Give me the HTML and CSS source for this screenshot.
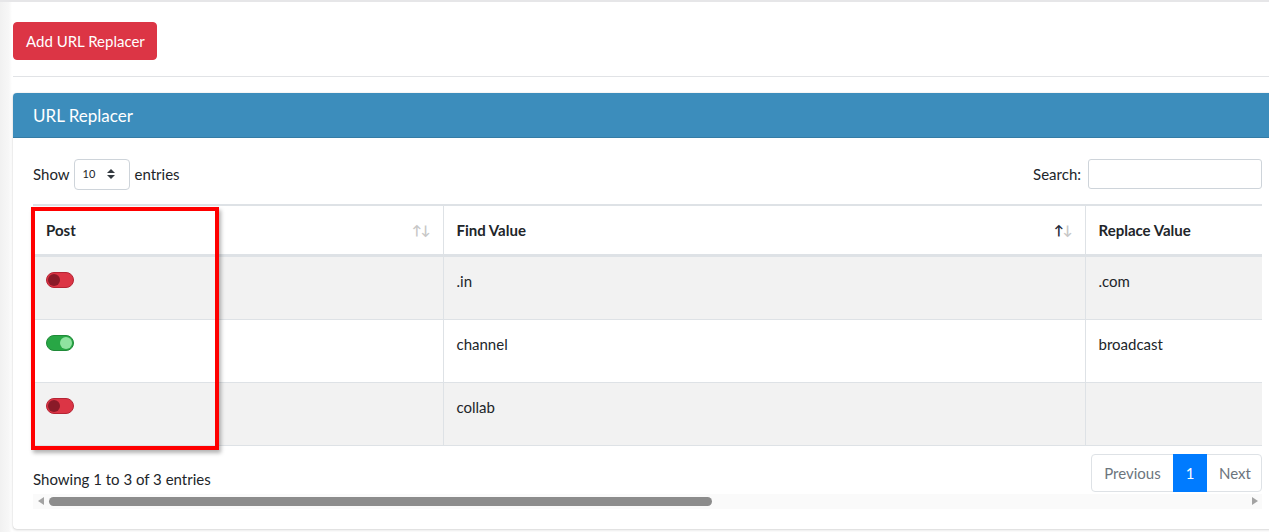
FILE: index.html
```html
<!DOCTYPE html>
<html>
<head>
<meta charset="utf-8">
<link rel="stylesheet" href="styles.css">
</head>
<body>
<div class="topline"></div>
<div class="page">
  <div class="actions">
    <button class="btn-danger">Add URL Replacer</button>
  </div>
  <hr class="sep">
  <div class="card">
    <div class="card-header">URL Replacer</div>
    <div class="card-body">
      <div class="dt-top">
        <label class="dt-length">Show
          <span class="select">10
            <svg class="caret" width="8" height="10" viewBox="0 0 8 10"><path d="M0 4 L4 0 L8 4 Z M0 6 L8 6 L4 10 Z" fill="#343a40"/></svg>
          </span>
          entries</label>
        <label class="dt-search">Search: <span class="search-input"></span></label>
      </div>
      <div class="table-area">
        <div class="table-wrap">
          <table class="dt">
            <colgroup><col class="c1"><col class="c2"><col class="c3"><col class="c4"></colgroup>
            <thead>
              <tr>
                <th><div class="th-in"><span>Post</span><span class="sort"><span class="up">↑</span><span class="down">↓</span></span></div></th>
                <th><div class="th-in"><span>Find Value</span><span class="sort"><span class="up active">↑</span><span class="down">↓</span></span></div></th>
                <th><div class="th-in"><span>Replace Value</span></div></th>
                <th></th>
              </tr>
            </thead>
            <tbody>
              <tr class="odd">
                <td><div class="cell-post"><span class="switch off"><span class="knob"></span></span></div></td>
                <td>.in</td>
                <td>.com</td>
                <td></td>
              </tr>
              <tr>
                <td><div class="cell-post"><span class="switch on"><span class="knob"></span></span></div></td>
                <td>channel</td>
                <td>broadcast</td>
                <td></td>
              </tr>
              <tr class="odd">
                <td><div class="cell-post"><span class="switch off"><span class="knob"></span></span></div></td>
                <td>collab</td>
                <td></td>
                <td></td>
              </tr>
            </tbody>
          </table>
        </div>
        <div class="annot"></div>
      </div>
      <div class="dt-bottom">
        <div class="dt-info">Showing 1 to 3 of 3 entries</div>
        <ul class="pagination">
          <li class="page-item disabled">Previous</li>
          <li class="page-item active">1</li>
          <li class="page-item disabled">Next</li>
        </ul>
      </div>
      <div class="hscroll">
        <span class="arrow left"></span>
        <div class="track"><div class="thumb"></div></div>
        <span class="arrow right"></span>
      </div>
    </div>
  </div>
</div>
</body>
</html>
```

FILE: styles.css
```css
* { box-sizing: border-box; }
html, body { margin: 0; padding: 0; }
body {
  font-family: "Lato", "Open Sans", sans-serif;
  font-size: 15px;
  line-height: 24px;
  color: #212529;
  overflow: hidden;
  width: 1269px;
  height: 532px;
  background: linear-gradient(to right, #f1f1f1 0, #f7f7f7 9px, #ffffff 12px);
}
.topline {
  height: 2px;
  background: #e6e6e8;
}
.page {
  margin-left: 13px;
  width: 1269px;
}
.actions { padding-top: 20px; height: 58px; }
.btn-danger {
  display: block;
  font-family: inherit;
  font-size: 15px;
  line-height: 24px;
  white-space: nowrap;
  color: #fff;
  background: #dc3545;
  border: 1px solid #dc3545;
  border-radius: 4px;
  padding: 6px 12px;
  width: 144px;
  height: 38px;
}
.sep {
  margin: 16px 0 16px 0;
  border: 0;
  border-top: 1px solid #e1e3e6;
  height: 0;
}
.card {
  background: #fff;
  border-radius: 4px;
  box-shadow: 0 0 1px rgba(0,0,0,.2), 0 1px 3px rgba(0,0,0,.15);
}
.card-header {
  background: #3c8dbc;
  color: #fff;
  font-size: 17px;
  line-height: 21px;
  padding: 12px 20px;
  height: 45px;
  border-radius: 4px 4px 0 0;
  border-bottom: 1px solid #357ca5;
}
.card-body {
  padding: 20px 20px 20px 20px;
  width: 1269px;
}
.dt-top {
  display: flex;
  justify-content: space-between;
  align-items: center;
  height: 32px;
  margin-bottom: 14px;
}
.dt-length, .dt-search {
  display: flex;
  align-items: center;
  gap: 4px;
}
.select {
  display: inline-flex;
  align-items: center;
  justify-content: space-between;
  width: 56px;
  height: 31px;
  border: 1px solid #ced4da;
  border-radius: 4px;
  font-size: 11px;
  padding: 0 14px 0 8px;
  margin-right: 1px;
}
.search-input {
  display: inline-block;
  width: 174px;
  height: 30px;
  border: 1px solid #ced4da;
  border-radius: 3px;
  margin-left: 3px;
}
.table-area { position: relative; }
.table-wrap {
  width: 1229px;
  overflow: hidden;
}
.dt {
  border-collapse: collapse;
  width: 2235px;
  table-layout: fixed;
  border-top: 2px solid #dee2e6;
}
.c1 { width: 410px; }
.c2 { width: 642px; }
.c3 { width: 600px; }
.c4 { width: 583px; }
.dt th {
  text-align: left;
  font-weight: 700;
  padding: 12px 12px 11px 13px;
  border-bottom: 3px solid #dee2e6;
  border-left: 1px solid #dee2e6;
  height: 50px;
}
.dt th:first-child, .dt td:first-child { border-left: 0; }
.th-in {
  display: flex;
  justify-content: space-between;
  align-items: center;
}
.sort {
  font-size: 13px;
  letter-spacing: -1px;
  color: #c7c7c7;
  padding-right: 1px;
}
.sort .active { color: #1d2a3a; font-weight: 700; }
.dt td {
  vertical-align: top;
  padding: 12px 12px 12px 13px;
  border-top: 1px solid #dee2e6;
  border-left: 1px solid #dee2e6;
  height: 63px;
}
.dt tbody tr:first-child td { border-top: 0; }
.dt tbody tr:last-child td { border-bottom: 1px solid #dee2e6; }
.dt tr.odd td { background: #f2f2f2; }
.cell-post { height: 38px; padding-top: 3px; }
.switch {
  display: block;
  position: relative;
  width: 28px;
  height: 16px;
  border-radius: 8px;
}
.switch .knob {
  position: absolute;
  top: 1px;
  width: 12px;
  height: 12px;
  border-radius: 50%;
}
.switch.off { background: #dc3545; border: 1px solid #b52434; }
.switch.off .knob { left: 1px; background: #8a1a28; }
.switch.on { background: #28a745; border: 1px solid #1f8a38; }
.switch.on .knob { right: 1px; background: #8fe3a0; }
.annot {
  position: absolute;
  left: -2px;
  top: 3px;
  width: 188px;
  height: 243px;
  border: 4px solid #ff0000;
  box-shadow: 2px 3px 4px rgba(0,0,0,.3);
}
.dt-bottom {
  display: flex;
  justify-content: space-between;
  align-items: flex-start;
  margin-top: 8px;
  height: 40px;
}
.dt-info { padding-top: 13px; }
.pagination {
  display: flex;
  list-style: none;
  margin: 0;
  padding: 0;
}
.page-item {
  height: 38px;
  padding: 6px 12px;
  border: 1px solid #dee2e6;
  color: #6c757d;
  margin-left: -1px;
  text-align: center;
}
.page-item:first-child { border-radius: 4px 0 0 4px; width: 83px; }
.page-item:last-child { border-radius: 0 4px 4px 0; width: 56px; }
.page-item.active {
  background: #007bff;
  border-color: #007bff;
  color: #fff;
  width: 34px;
  padding: 6px 0;
  position: relative;
}
.hscroll {
  display: flex;
  align-items: center;
  height: 15px;
  background: #fafafa;
  padding: 0 4px 0 5px;
}
.track { flex: 1; height: 9px; padding: 0 5px; }
.thumb {
  width: 663px;
  height: 9px;
  border-radius: 5px;
  background: #8c8c8c;
}
.arrow {
  width: 0;
  height: 0;
  border-top: 4px solid transparent;
  border-bottom: 4px solid transparent;
}
.arrow.left { border-right: 6px solid #a3a3a3; }
.arrow.right { border-left: 6px solid #a3a3a3; }
```
